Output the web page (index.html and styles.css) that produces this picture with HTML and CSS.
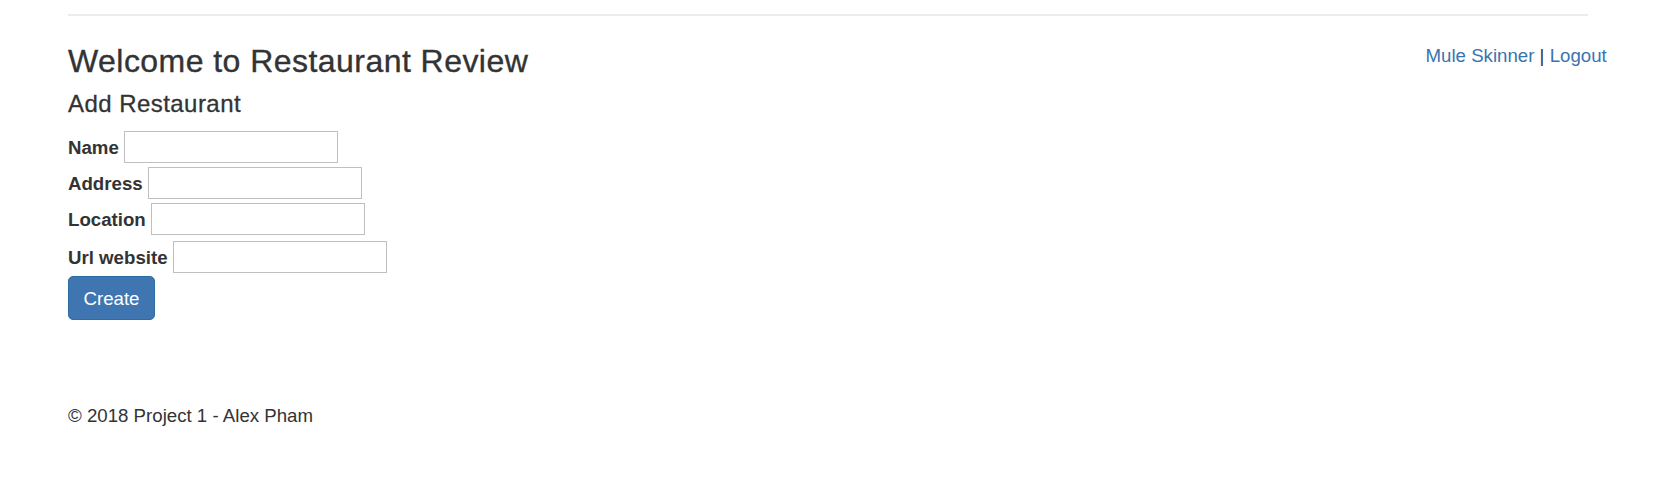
FILE: index.html
```html
<!DOCTYPE html>
<html lang="en">
<head>
<meta charset="utf-8">
<title>Restaurant Review</title>
<link rel="stylesheet" href="styles.css">
</head>
<body>
<div class="page">
  <hr class="rule">
  <header class="header">
    <h3 class="title">Welcome to Restaurant Review</h3>
    <div class="user"><a href="#">Mule Skinner</a> | <a href="#">Logout</a></div>
  </header>
  <h4 class="subtitle">Add Restaurant</h4>
  <form class="form">
    <div class="field"><label class="label">Name</label><input class="input" type="text"></div>
    <div class="field"><label class="label">Address</label><input class="input" type="text"></div>
    <div class="field"><label class="label">Location</label><input class="input" type="text"></div>
    <div class="field field--spaced"><label class="label">Url website</label><input class="input" type="text"></div>
    <button class="btn" type="button">Create</button>
  </form>
  <footer class="footer">© 2018 Project 1 - Alex Pham</footer>
</div>
</body>
</html>
```

FILE: styles.css
```css
* { box-sizing: border-box; }

html, body {
  margin: 0;
  padding: 0;
  background: #ffffff;
}

body {
  font-family: "Liberation Sans", Arial, Helvetica, sans-serif;
  font-size: 18.67px;
  line-height: 26.67px;
  color: #333333;
}

.page {
  width: 1520px;
  margin-left: 68px;
  padding-top: 14px;
}

.rule {
  height: 2px;
  margin: 0;
  border: 0;
  background: #ececec;
}

.header {
  display: flex;
  justify-content: space-between;
  align-items: flex-start;
  margin-top: 27px;
}

.title {
  margin: 0;
  padding-top: 1px;
  font-size: 32px;
  line-height: 35.2px;
  font-weight: normal;
  letter-spacing: 0.45px;
  -webkit-text-stroke: 0.35px #333333;
  color: #333333;
}

.user {
  margin-right: -18.7px;
  color: #333333;
}

.user a {
  color: #3a74b0;
  text-decoration: none;
}

.subtitle {
  margin: 11.3px 0 0;
  font-size: 24px;
  line-height: 26.4px;
  font-weight: normal;
  letter-spacing: 0.45px;
  -webkit-text-stroke: 0.3px #333333;
  color: #333333;
}

.form {
  margin-top: 14.1px;
}

.field {
  display: flex;
  align-items: flex-start;
  gap: 5.5px;
  margin-bottom: 4.6px;
}

.field--spaced {
  margin-top: 6.6px;
  margin-bottom: 3.2px;
}

.label {
  font-weight: bold;
  margin-top: 4.2px;
}

.input {
  width: 214px;
  height: 31.5px;
  margin: 0;
  border: 1px solid #c0c0c0;
  background: #ffffff;
  font-family: inherit;
  font-size: 16px;
  padding: 0 4px;
}

.btn {
  display: flex;
  align-items: center;
  justify-content: center;
  width: 87px;
  height: 44px;
  padding: 2px 0 0;
  border: 1px solid #2e6da4;
  border-radius: 5px;
  background: #3f76b2;
  color: #ffffff;
  font-family: inherit;
  font-size: 18.67px;
  line-height: 26.67px;
}

.footer {
  margin-top: 83px;
  color: #333333;
}
```
